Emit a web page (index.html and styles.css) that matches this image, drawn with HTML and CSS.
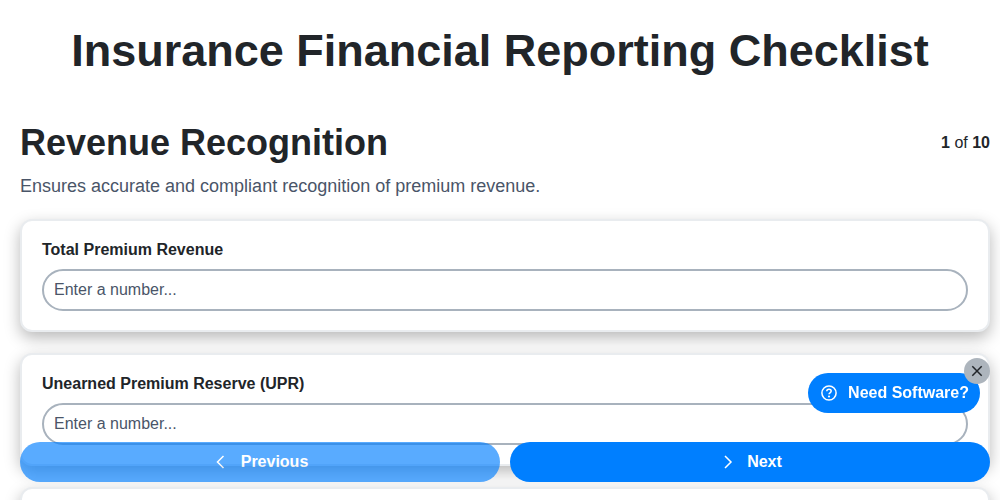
FILE: index.html
```html
<!DOCTYPE html>
<html lang="en">
<head>
<meta charset="utf-8">
<title>Insurance Financial Reporting Checklist</title>
<link rel="stylesheet" href="styles.css">
</head>
<body>
<main class="page">
  <h1 class="title">Insurance Financial Reporting Checklist</h1>
  <section class="section">
    <div class="section-head">
      <h2 class="section-title">Revenue Recognition</h2>
      <div class="progress"><b>1</b> of <b>10</b></div>
    </div>
    <p class="section-desc">Ensures accurate and compliant recognition of premium revenue.</p>
    <div class="cards">
      <div class="card">
        <label class="label">Total Premium Revenue</label>
        <input class="input" type="text" placeholder="Enter a number...">
      </div>
      <div class="card">
        <label class="label">Unearned Premium Reserve (UPR)</label>
        <input class="input" type="text" placeholder="Enter a number...">
      </div>
      <div class="card"></div>
    </div>
  </section>
</main>
<nav class="nav">
  <button class="btn btn-prev" type="button">
    <svg class="chev" viewBox="0 0 16 16" width="16" height="16"><path d="M11.500 2 5.500 8l6 6"/></svg>
    <span>Previous</span>
  </button>
  <button class="btn" type="button">
    <svg class="chev" viewBox="0 0 16 16" width="16" height="16"><path d="M7 2l6 6-6 6"/></svg>
    <span>Next</span>
  </button>
</nav>
<div class="promo">
  <button class="promo-btn" type="button">
    <svg class="promo-icon" viewBox="0 0 16 16" width="16" height="16"><circle cx="8" cy="8" r="7.100"/><path d="M5.800 6.200c0-1.300 1-2 2.200-2s2.200.7 2.200 1.900c0 1.700-2.200 1.600-2.200 3.100"/><circle class="dot" cx="8" cy="11.500" r="1.050"/></svg>
    <span>Need Software?</span>
  </button>
  <button class="promo-close" type="button" aria-label="Close">
    <svg viewBox="0 0 12 12" width="12" height="12"><path d="M1.300 1.300l9.400 9.400M10.700 1.300l-9.400 9.400"/></svg>
  </button>
</div>
</body>
</html>
```
FILE: styles.css
```css
* { box-sizing: border-box; }
html, body { margin: 0; height: 100%; overflow: hidden; background: #fff; }
body { font-family: "Liberation Sans", Arial, sans-serif; color: #212529; }
.page { padding: 0 20px; }
.title { margin: 0; padding-top: 24px; font-size: 45px; line-height: 54px; font-weight: 700; text-align: center; }
.section { margin: 43px -10px 0 0; }
.section-head { display: flex; justify-content: space-between; align-items: flex-start; }
.section-title { margin: 0; font-size: 36px; line-height: 43px; font-weight: 700; }
.progress { font-size: 16px; line-height: 38px; padding-top: 3px; }
.section-desc { margin: 11px 0 0; font-size: 18px; line-height: 22px; color: #4a5568; }
.cards { display: flex; flex-direction: column; gap: 21px; margin-top: 22px; }
.card { height: 113px; padding: 19px 20px; background: #fff; border: 2px solid #e9ecef; border-radius: 12px; box-shadow: 0 6px 16px rgba(0, 0, 0, .28); }
.label { display: block; font-size: 16px; line-height: 19px; font-weight: 700; margin-bottom: 10px; }
.input { display: block; width: 100%; height: 42px; padding: 0 10px; border: 2px solid #a8b2bd; border-radius: 21px; background: #fff; font: 16px "Liberation Sans", Arial, sans-serif; color: #212529; outline: 0; }
.input::placeholder { color: #4a5568; opacity: 1; }
.nav { position: fixed; left: 20px; right: 10px; bottom: 18px; display: flex; gap: 10px; }
.btn { flex: 1; height: 40px; display: flex; align-items: center; justify-content: center; gap: 13px; border: 0; border-radius: 20px; background: #007fff; color: #fff; font: 700 16px "Liberation Sans", Arial, sans-serif; }
.btn-prev { opacity: .65; }
.chev { fill: none; stroke: #fff; stroke-width: 1.500; }
.promo { position: fixed; right: 20px; bottom: 87px; }
.promo-btn { display: flex; align-items: center; gap: 11px; height: 40px; padding: 0 11px 0 13px; border: 0; border-radius: 20px; background: #007fff; color: #fff; font: 700 16px "Liberation Sans", Arial, sans-serif; }
.promo-icon { fill: none; stroke: #fff; stroke-width: 1.500; }
.promo-icon .dot { fill: #fff; stroke: none; }
.promo-close { position: absolute; top: -15px; right: -10px; width: 26px; height: 26px; padding: 0; display: flex; align-items: center; justify-content: center; border: 0; border-radius: 50%; background: #adb5bd; }
.promo-close svg { fill: none; stroke: #212529; stroke-width: 1.500; }
```
